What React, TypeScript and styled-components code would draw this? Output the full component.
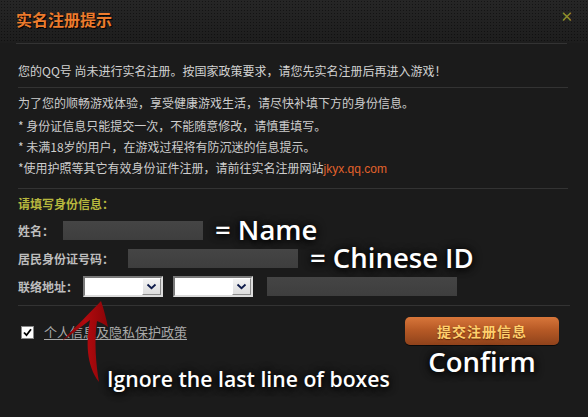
import React from "react";
import styled, { createGlobalStyle } from "styled-components";

const Global = createGlobalStyle`
  html, body { margin: 0; padding: 0; background: #1a1a1a; }
  body { width: 588px; height: 417px; overflow: hidden; font-family: "Noto Sans CJK SC", "Noto Sans", sans-serif; }
  * { box-sizing: border-box; }
`;

const Page = styled.div`
  position: relative;
  width: 588px;
  height: 417px;
  background: #1b1b1b;
  color: #cfcfcf;
  font-size: 12px;
`;

const Header = styled.div`
  height: 43px;
  display: flex;
  justify-content: space-between;
  align-items: flex-start;
  padding: 9px 15px 0 16px;
  background-color: #212121;
  background-image: radial-gradient(rgba(0, 0, 0, 0.45) 0.7px, transparent 0.9px),
    linear-gradient(#262626, #1d1d1d);
  background-size: 3px 3px, 100% 100%;
`;

const Title = styled.h1`
  margin: 0;
  font-size: 16px;
  line-height: 21px;
  font-weight: bold;
  color: #ec7b2d;
  text-shadow: 1px 1px 1px #000;
`;

const Close = styled.span`
  font-family: "DejaVu Sans", sans-serif;
  font-size: 15px;
  font-weight: bold;
  line-height: 14px;
  margin-top: 1px;
  color: #8e8e2c;
`;

const Divider = styled.div<{ $l: number; $r: number }>`
  height: 1px;
  background: #333;
  margin: 0 ${(p) => p.$r}px 0 ${(p) => p.$l}px;
`;

const Intro = styled.p`
  margin: 0;
  padding: 17px 18px 6px;
  line-height: 20px;
  color: #d2d2d2;
`;

const Info = styled.div`
  padding: 4px 18px 8px;
`;

const InfoLine = styled.p<{ $gap?: number }>`
  margin: 0 0 ${(p) => p.$gap || 0}px;
  line-height: 21px;
  color: #cdcdcd;
  white-space: nowrap;
`;

const Site = styled.span`
  font-family: "Liberation Sans", sans-serif;
  font-size: 12px;
  color: #e2622b;
`;

const Form = styled.div`
  padding: 5px 18px 5px;
`;

const FormTitle = styled.div`
  line-height: 20px;
  margin-bottom: 2px;
  font-weight: bold;
  color: #b7b73e;
`;

const Row = styled.div`
  height: 28px;
  display: flex;
  align-items: center;
`;

const Label = styled.span<{ $w: number }>`
  width: ${(p) => p.$w}px;
  flex: none;
  font-weight: bold;
  color: #bdbdbd;
  white-space: nowrap;
`;

const GrayBox = styled.div<{ $w: number; $ml?: number }>`
  width: ${(p) => p.$w}px;
  height: 19px;
  margin-left: ${(p) => p.$ml || 0}px;
  background: linear-gradient(#454545, #3e3e3e);
`;

const Note = styled.span<{ $ml: number; $size?: number }>`
  margin-left: ${(p) => p.$ml}px;
  font-family: "Open Sans", "Noto Sans", sans-serif;
  font-weight: 600;
  font-size: ${(p) => p.$size || 27.5}px;
  line-height: 1;
  color: #fff;
  white-space: nowrap;
  text-shadow: 0 2px 6px rgba(0, 0, 0, 0.95), 0 0 10px rgba(0, 0, 0, 0.8);
`;

const Select = styled.div<{ $ml?: number }>`
  width: 80px;
  height: 21px;
  margin-left: ${(p) => p.$ml || 0}px;
  display: flex;
  background: #fff;
  border: 2px solid;
  border-color: #7a7a7a #dcdcdc #dcdcdc #7a7a7a;
`;

const SelectField = styled.div`
  flex: 1;
`;

const SelectBtn = styled.div`
  width: 19px;
  display: flex;
  align-items: center;
  justify-content: center;
  background: linear-gradient(#f4f4f4, #dcdcdc);
  border: 1px solid;
  border-color: #fff #8a8a8a #8a8a8a #fff;
`;

const Bottom = styled.div`
  display: flex;
  justify-content: space-between;
  align-items: flex-start;
  padding: 0 29px 0 21px;
`;

const Agree = styled.label`
  display: flex;
  align-items: center;
  margin-top: 17px;
  gap: 10px;
`;

const Check = styled.span`
  width: 13px;
  height: 13px;
  display: flex;
  align-items: center;
  justify-content: center;
  background: #fff;
  border: 1px solid #888;
`;

const Policy = styled.a`
  font-size: 13px;
  line-height: 18px;
  color: #a9a9a9;
  text-decoration: underline;
  text-underline-offset: 2px;
`;

const SubmitCol = styled.div`
  display: flex;
  flex-direction: column;
  align-items: center;
  margin-top: 11px;
  gap: 3px;
`;

const Submit = styled.button`
  width: 154px;
  height: 28px;
  border: none;
  border-radius: 5px;
  padding: 0;
  font-family: "Noto Sans CJK SC", sans-serif;
  font-size: 14px;
  font-weight: bold;
  letter-spacing: 1px;
  color: #ffcf6c;
  text-shadow: 0 1px 1px rgba(80, 30, 0, 0.7);
  background: linear-gradient(#d8763a 0%, #b75a26 45%, #8f421b 100%);
  box-shadow: 0 1px 0 rgba(0, 0, 0, 0.6);
`;

const IgnoreNote = styled.span`
  position: absolute;
  left: 107px;
  top: 366px;
  font-family: "Open Sans", "Noto Sans", sans-serif;
  font-weight: 600;
  font-size: 21.2px;
  line-height: 1.25;
  color: #fff;
  white-space: nowrap;
  text-shadow: 0 2px 6px rgba(0, 0, 0, 0.95), 0 0 10px rgba(0, 0, 0, 0.8);
`;

const Arrow = styled.svg`
  position: absolute;
  left: 55px;
  top: 295px;
  width: 60px;
  height: 95px;
  overflow: visible;
`;

const Chevron = () => (
  <svg width="11" height="7" viewBox="0 0 11 7">
    <path d="M1.5 1.5 L5.5 5.2 L9.5 1.5" fill="none" stroke="#0d1a4a" strokeWidth="1.8" />
  </svg>
);

const Dropdown = ({ ml }: { ml?: number }) => (
  <Select $ml={ml}>
    <SelectField />
    <SelectBtn>
      <Chevron />
    </SelectBtn>
  </Select>
);

export default function App() {
  return (
    <Page>
      <Global />
      <Header>
        <Title>实名注册提示</Title>
        <Close>✕</Close>
      </Header>
      <Divider $l={16} $r={21} />
      <Intro>您的QQ号 尚未进行实名注册。按国家政策要求，请您先实名注册后再进入游戏！</Intro>
      <Divider $l={18} $r={20} />
      <Info>
        <InfoLine $gap={2}>为了您的顺畅游戏体验，享受健康游戏生活，请尽快补填下方的身份信息。</InfoLine>
        <InfoLine>* 身份证信息只能提交一次，不能随意修改，请慎重填写。</InfoLine>
        <InfoLine>* 未满18岁的用户，在游戏过程将有防沉迷的信息提示。</InfoLine>
        <InfoLine>
          *使用护照等其它有效身份证件注册，请前往实名注册网站<Site>jkyx.qq.com</Site>
        </InfoLine>
      </Info>
      <Divider $l={18} $r={20} />
      <Form>
        <FormTitle>请填写身份信息：</FormTitle>
        <Row>
          <Label $w={45}>姓名：</Label>
          <GrayBox $w={140} />
          <Note $ml={12}>= Name</Note>
        </Row>
        <Row>
          <Label $w={110}>居民身份证号码：</Label>
          <GrayBox $w={170} />
          <Note $ml={12}>= Chinese ID</Note>
        </Row>
        <Row>
          <Label $w={65}>联络地址：</Label>
          <Dropdown />
          <Dropdown ml={10} />
          <GrayBox $w={190} $ml={14} />
        </Row>
      </Form>
      <Divider $l={18} $r={18} />
      <Bottom>
        <Agree>
          <Check>
            <svg width="9" height="9" viewBox="0 0 9 9">
              <path d="M1 4.5 L3.5 7.2 L8 1.2" fill="none" stroke="#000" strokeWidth="1.8" />
            </svg>
          </Check>
          <Policy>个人信息及隐私保护政策</Policy>
        </Agree>
        <SubmitCol>
          <Submit>提交注册信息</Submit>
          <Note $ml={0}>Confirm</Note>
        </SubmitCol>
      </Bottom>
      <Arrow viewBox="55 295 60 95">
        <defs>
          <linearGradient id="ag" x1="0" y1="0" x2="1" y2="0">
            <stop offset="0" stopColor="#7a0306" />
            <stop offset="0.5" stopColor="#b20a0e" />
            <stop offset="1" stopColor="#8a0508" />
          </linearGradient>
        </defs>
        <path
          d="M101,301 C92,311 76,326 62,341 C72,334 81,327 90,320 C86,341 86,365 99,382 C96,365 94,341 97,321 C100,322 104,324 108,327 C106,318 104,310 101,301 Z"
          fill="url(#ag)"
        />
      </Arrow>
      <IgnoreNote>Ignore the last line of boxes</IgnoreNote>
    </Page>
  );
}
